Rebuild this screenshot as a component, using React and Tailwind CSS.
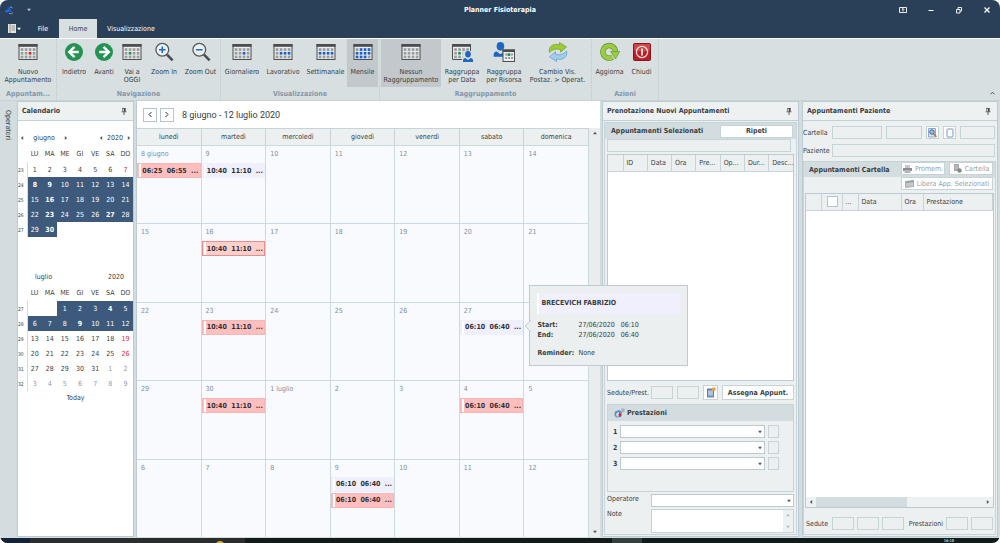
import { Fragment } from "react";

const WEEKDAYS = ["LU", "MA", "ME", "GI", "VE", "SA", "DO"];

const JUNE = [
  { week: 23, days: [1, 2, 3, 4, 5, 6, 7], red: [7] },
  { week: 24, days: [8, 9, 10, 11, 12, 13, 14], sel: [0, 6], bold: [8, 9] },
  { week: 25, days: [15, 16, 17, 18, 19, 20, 21], sel: [0, 6], bold: [16] },
  { week: 26, days: [22, 23, 24, 25, 26, 27, 28], sel: [0, 6], bold: [23, 27] },
  { week: 27, days: [29, 30, "", "", "", "", ""], sel: [0, 1], bold: [30] },
];

const JULY = [
  { week: 27, days: ["", "", 1, 2, 3, 4, 5], sel: [2, 6], bold: [4] },
  { week: 28, days: [6, 7, 8, 9, 10, 11, 12], sel: [0, 6], bold: [9] },
  { week: 29, days: [13, 14, 15, 16, 17, 18, 19], red: [19] },
  { week: 30, days: [20, 21, 22, 23, 24, 25, 26], red: [26] },
  { week: 31, days: [27, 28, 29, 30, 31, 1, 2], muted: [1, 2] },
  { week: 32, days: [3, 4, 5, 6, 7, 8, 9], muted: [3, 4, 5, 6, 7, 8, 9] },
];

const COLUMNS = ["lunedì", "martedì", "mercoledì", "giovedì", "venerdì", "sabato", "domenica"];

const PINK = "bg-[#ffbfbf] border-[#f9b4b4]";
const ACTIVE = "bg-[#ffcfcb] border-[#e98d8d]";
const LILAC = "bg-[#f0effd] border-[#f0effd]";

const WEEKS = [
  [
    { day: "8 giugno", events: [["06:25", "06:55", PINK]] },
    { day: "9", events: [["10:40", "11:10", LILAC]] },
    { day: "10" }, { day: "11" }, { day: "12" }, { day: "13" }, { day: "14" },
  ],
  [
    { day: "15" },
    { day: "16", events: [["10:40", "11:10", ACTIVE]] },
    { day: "17" }, { day: "18" }, { day: "19" }, { day: "20" }, { day: "21" },
  ],
  [
    { day: "22" },
    { day: "23", events: [["10:40", "11:10", PINK]] },
    { day: "24" }, { day: "25" }, { day: "26" },
    { day: "27", events: [["06:10", "06:40", LILAC]], tip: true },
    { day: "28" },
  ],
  [
    { day: "29" },
    { day: "30", events: [["10:40", "11:10", PINK]] },
    { day: "1 luglio" }, { day: "2" }, { day: "3" },
    { day: "4", events: [["06:10", "06:40", PINK]] },
    { day: "5" },
  ],
  [
    { day: "6" }, { day: "7" }, { day: "8" },
    { day: "9", events: [["06:10", "06:40", LILAC], ["06:10", "06:40", PINK]] },
    { day: "10" }, { day: "11" }, { day: "12" },
  ],
];

/* ---------- icons ---------- */

function GridIcon({ dots = [], color = "#1d5fc4" }) {
  const cells = [];
  for (let r = 0; r < 3; r++) {
    for (let c = 0; c < 4; c++) {
      const on = dots.includes(r * 4 + c);
      cells.push(
        <rect key={r * 4 + c} x={2.7 + c * 4} y={5.2 + r * 3.7} width="2.700" height="2.700" fill={on ? color : "#9a9c9d"} />
      );
    }
  }
  return (
    <svg width="20" height="18" viewBox="0 0 20 18" aria-hidden="true">
      <rect x="1" y="1.5" width="18" height="15" fill="#e9eded" stroke="#4d4d4f" />
      <rect x="0.5" y="1" width="19" height="2.800" fill="#4d4d4f" />
      {cells}
    </svg>
  );
}

function ArrowIcon({ right }) {
  return (
    <svg width="20" height="20" viewBox="0 0 20 20" aria-hidden="true">
      <circle cx="10" cy="10" r="9" fill="#249251" />
      <path
        d="M10.5 4.8 5.2 10l5.3 5.2M5.8 10h9"
        transform={right ? "rotate(180 10 10)" : undefined}
        fill="none" stroke="#fff" strokeWidth="2.4"
      />
    </svg>
  );
}

function MagnifierIcon({ plus }) {
  return (
    <svg width="20" height="20" viewBox="0 0 20 20" aria-hidden="true">
      <circle cx="8.3" cy="7.8" r="6.4" fill="#edf1f2" stroke="#55585a" strokeWidth="1.3" />
      <path d="m13 12.6 5.6 5.8" stroke="#4d4f51" strokeWidth="2.6" />
      <path d={plus ? "M5 7.8h6.6M8.3 4.5v6.6" : "M5 7.8h6.6"} stroke="#2467c9" strokeWidth="1.6" />
    </svg>
  );
}

function Person({ x, y }) {
  return (
    <g transform={`translate(${x} ${y})`} fill="#1f66c1">
      <ellipse cx="5" cy="3.2" rx="2.8" ry="3.2" />
      <path d="M0 11V9.2Q0 7.3 2.2 7L5 9l2.800-2Q10 7.300 10 9.200V11z" />
    </g>
  );
}

function GroupDateIcon() {
  return (
    <svg width="22" height="20" viewBox="0 0 22 20" aria-hidden="true">
      <path d="M11 17.500H1.500V2.500h18V9" fill="#e9eded" stroke="#4d4d4f" />
      <path d="M1 2h19v2.800H1z" fill="#4d4d4f" />
      {[0, 1, 2].map((r) =>
        [0, 1, 2, 3].map((c) => (
          <rect
            key={r * 4 + c} x={3.2 + c * 4} y={6.2 + r * 3.7} width="2.700" height="2.700"
            fill={r === 1 && c === 1 ? "#249251" : "#9a9c9d"}
          />
        ))
      )}
      <rect x="11.500" y="9" width="10.500" height="11" fill="#d8dfe1" />
      <Person x={12} y={9} />
    </svg>
  );
}

function GroupResourceIcon() {
  return (
    <svg width="22" height="20" viewBox="0 0 22 20" aria-hidden="true">
      <g transform="scale(1.350)">
        <Person x={0.5} y={0} />
      </g>
      <rect x="10" y="8" width="11.500" height="11.500" fill="#e9eded" stroke="#4d4d4f" />
      <path d="M9.500 7.500h12.500v2.500H9.500z" fill="#4d4d4f" />
      <path d="M12 11.500h2v2h-2zM18 11.500h2v2h-2zM12 15h2v2h-2zM15 15h2v2h-2zM18 15h2v2h-2z" fill="#9a9c9d" />
      <path d="M14.500 11.200h2.800v2.800h-2.800z" fill="#249251" />
    </svg>
  );
}

function SwapIcon() {
  return (
    <svg width="20" height="20" viewBox="0 0 20 20" aria-hidden="true">
      <path d="M1.500 10.500C0 4.500 5.500 1 11.500 2.800V.500L18.500 5l-6 5.200V7.600C8.500 6.500 5 7 1.500 10.500z" fill="#9ccb35" stroke="#6f9e1e" strokeWidth=".7" />
      <path d="M18.500 9C20 15 14.500 18.800 8.500 17v2.500L1.500 14.800l6-5.200v2.600c4 1.200 7.500.500 11-3.200z" fill="#a3cdec" stroke="#5f98c8" strokeWidth=".7" />
    </svg>
  );
}

function RefreshIcon() {
  return (
    <svg width="20" height="20" viewBox="0 0 20 20" aria-hidden="true">
      <path d="M12.500 15.200A6.300 6.300 0 1 1 15.500 9.500" fill="none" stroke="#5f9120" strokeWidth="5.400" />
      <path d="M12.500 15.200A6.300 6.300 0 1 1 15.500 9.500" fill="none" stroke="#9bcb45" strokeWidth="4.200" />
      <path d="M10.500 9.500h9.300L15.500 17z" fill="#9bcb45" stroke="#5f9120" strokeWidth=".6" />
    </svg>
  );
}

function PowerIcon() {
  return (
    <svg width="18" height="18" viewBox="0 0 18 18" aria-hidden="true">
      <rect x=".5" y=".5" width="17" height="17" rx="1" fill="#b91f25" stroke="#8a151a" />
      <path d="M1 1h16v6Q9 10 1 7z" fill="#d0474b" />
      <circle cx="9" cy="9" r="5.600" fill="none" stroke="#f3dede" strokeWidth="1.300" />
      <path d="M9 5.500v7" stroke="#f7e6e6" strokeWidth="1.800" />
    </svg>
  );
}

function PinIcon() {
  return (
    <svg width="6" height="7" viewBox="0 0 6 7" aria-hidden="true">
      <path d="M1.200.500h3.600M1.800.500v3M4 .500v3M.500 3.800h5M3 4v3" stroke="#42484c" strokeWidth=".8" fill="none" />
      <path d="M3 .500h1.400v3.200H3z" fill="#42484c" />
    </svg>
  );
}

function Caret({ dir = "down", className = "fill-[#555c60]" }) {
  const d = {
    down: "M0 1h5L2.500 4z",
    up: "M0 4h5L2.500 1z",
    left: "M4 0v5L1 2.500z",
    right: "M1 0v5l3-2.500z",
  }[dir];
  return (
    <svg width="4" height="4" viewBox="0 0 5 5" className={className} aria-hidden="true">
      <path d={d} />
    </svg>
  );
}

function LogoIcon() {
  return (
    <svg width="11" height="10" viewBox="0 0 11 10" aria-hidden="true">
      <path d="M4 2.500 8 .800 6.500 3.500 3.500 5z" fill="#1f5fd0" />
      <path d="M1 5.500 6 4l2 3-3-.500L2 8z" fill="#2368e0" />
      <path d="M5 8.500q3 1 4-1M6.500 2l2 1" stroke="#9fb6cc" strokeWidth=".8" fill="none" />
    </svg>
  );
}

/* ---------- ribbon ---------- */

function RibbonButton({ icon, label, active, className }) {
  return (
    <button type="button" className={`flex h-12 flex-col items-center pt-[3px] ${active ? "bg-[#c2c8cc]" : ""} ${className}`}>
      <span className="flex h-5 items-center">{icon}</span>
      <span className="mt-[6px] whitespace-pre text-center leading-[8px]">{label}</span>
    </button>
  );
}

function RibbonGroup({ title, children }) {
  return (
    <div className="flex flex-col border-r border-dotted border-[#bcc8cd] px-px">
      <div className="flex">{children}</div>
      <div className="text-center font-bold leading-[14px] text-[#8296ab]">{title}</div>
    </div>
  );
}

function Ribbon() {
  return (
    <div className="relative flex h-[63px] shrink-0 border-b border-[#c6d2d6] border-t border-t-white bg-[#d7dfe1]">
      <RibbonGroup title="Appuntam...">
        <RibbonButton className="w-[54px]" icon={<GridIcon dots={[6]} color="#ef2020" />} label={"Nuovo\nAppuntamento"} />
      </RibbonGroup>
      <RibbonGroup title="Navigazione">
        <RibbonButton className="w-8" icon={<ArrowIcon />} label="Indietro" />
        <RibbonButton className="w-7" icon={<ArrowIcon right />} label="Avanti" />
        <RibbonButton className="w-7" icon={<GridIcon dots={[5]} color="#249251" />} label={"Vai a\nOGGI"} />
        <RibbonButton className="w-9" icon={<MagnifierIcon plus />} label="Zoom In" />
        <RibbonButton className="w-[37px]" icon={<MagnifierIcon />} label="Zoom Out" />
      </RibbonGroup>
      <RibbonGroup title="Visualizzazione">
        <RibbonButton className="w-10" icon={<GridIcon dots={[6]} />} label="Giornaliero" />
        <RibbonButton className="w-[42px]" icon={<GridIcon dots={[5, 6, 7]} />} label="Lavorativo" />
        <RibbonButton className="w-[43px]" icon={<GridIcon dots={[4, 5, 6, 7]} />} label="Settimanale" />
        <RibbonButton
          className="w-[31px]" active
          icon={<GridIcon dots={[1, 2, 3, 4, 5, 6, 7, 8, 9, 10]} />} label="Mensile"
        />
      </RibbonGroup>
      <RibbonGroup title="Raggruppamento">
        <RibbonButton className="w-[60px]" active icon={<GridIcon />} label={"Nessun\nRaggruppamento"} />
        <RibbonButton className="w-[42px]" icon={<GroupDateIcon />} label={"Raggruppa\nper Data"} />
        <RibbonButton className="w-[42px]" icon={<GroupResourceIcon />} label={"Raggruppa\nper Risorsa"} />
        <RibbonButton className="w-[65px]" icon={<SwapIcon />} label={"Cambio Vis.\nPostaz. > Operat."} />
      </RibbonGroup>
      <RibbonGroup title="Azioni">
        <RibbonButton className="w-[33px]" icon={<RefreshIcon />} label="Aggiorna" />
        <RibbonButton className="w-[31px]" icon={<PowerIcon />} label="Chiudi" />
      </RibbonGroup>
      <button type="button" aria-label="Riduci barra" className="absolute bottom-1 right-1 p-px">
        <svg width="5" height="4" viewBox="0 0 5 4" aria-hidden="true">
          <path d="m.5 3.300 2-2 2 2" fill="none" stroke="#454b4f" />
        </svg>
      </button>
    </div>
  );
}

function TitleBar() {
  return (
    <header className="shrink-0 bg-[#2a4059] text-white">
      <div className="grid h-[19px] grid-cols-3 items-center">
        <div className="flex items-center gap-3 pl-1">
          <LogoIcon />
          <Caret className="fill-[#b9c5d0]" />
        </div>
        <h1 className="text-center font-bold">Planner Fisioterapia</h1>
        <div className="flex items-center justify-end gap-5 pr-[9px]">
          <button type="button" aria-label="Opzioni barra">
            <svg width="8" height="8" viewBox="0 0 8 8" fill="none" stroke="#fff" strokeWidth=".9" aria-hidden="true">
              <path d="M.5 1.500h7v5h-7zM4 5.500V2.500M2.800 3.700 4 2.500l1.200 1.200" />
            </svg>
          </button>
          <button type="button" aria-label="Riduci a icona">
            <svg width="8" height="8" viewBox="0 0 8 8" stroke="#fff" aria-hidden="true"><path d="M1.500 4.500h5" /></svg>
          </button>
          <button type="button" aria-label="Ripristina">
            <svg width="8" height="8" viewBox="0 0 8 8" fill="none" stroke="#fff" strokeWidth=".9" aria-hidden="true">
              <path d="M1.500 3.500h3.500v3.500H1.500zM3 3.500v-2h3.500V5H5" />
            </svg>
          </button>
          <button type="button" aria-label="Chiudi finestra">
            <svg width="8" height="8" viewBox="0 0 8 8" stroke="#fff" strokeWidth="1.300" aria-hidden="true">
              <path d="m1.500 1.500 5 5m0-5-5 5" />
            </svg>
          </button>
        </div>
      </div>
      <nav className="flex h-[19px] items-stretch">
        <button type="button" aria-label="Menu" className="flex w-[27px] items-center gap-px pl-2">
          <svg width="8" height="9" viewBox="0 0 8 9" aria-hidden="true">
            <path d="M0 0h8v9H0z" fill="#e4e4e0" />
            <path d="M2 0v9M3.500 2h3.500M3.500 4h3.500M3.500 6h3.500" stroke="#77716a" strokeWidth=".7" />
          </svg>
          <Caret className="fill-white" />
        </button>
        <button type="button" className="w-8">File</button>
        <button type="button" className="w-[38px] bg-[#d7dfe1] text-[#3a4045]">Home</button>
        <button type="button" className="px-[10px]">Visualizzazione</button>
      </nav>
    </header>
  );
}

/* ---------- left calendar ---------- */

function dayClass(row, day, i) {
  const selected = row.sel && i >= row.sel[0] && i <= row.sel[1];
  let c = "p-0 text-center font-normal";
  if (selected) c += " bg-[#3d5a7c] text-white";
  else if (row.red?.includes(day)) c += " text-[#d92c35]";
  else if (row.muted?.includes(day)) c += " text-[#8c9cab]";
  return c;
}

function MonthTable({ rows }) {
  return (
    <table className="w-full table-fixed border-collapse text-center">
      <thead>
        <tr className="h-4">
          <th className="w-[9px] p-0" />
          {WEEKDAYS.map((d) => <th key={d} className="p-0 font-normal">{d}</th>)}
        </tr>
      </thead>
      <tbody>
        {rows.map((row, r) => (
          <tr key={r} className="h-[15px]">
            <th className="border-r border-[#d5dde1] p-0 text-left text-[5px] font-normal">{row.week}</th>
            {row.days.map((d, i) => (
              <td key={i} className={dayClass(row, d, i)}>
                {row.bold?.includes(d) ? <b>{d}</b> : d}
              </td>
            ))}
          </tr>
        ))}
      </tbody>
    </table>
  );
}

function PanelTitle({ children }) {
  return (
    <div className="flex h-[19px] shrink-0 items-center justify-between border-b border-[#c3d0d5] bg-[#eef1f1] pl-1 pr-[6px]">
      <h2 className="font-bold">{children}</h2>
      <button type="button" aria-label="Blocca pannello"><PinIcon /></button>
    </div>
  );
}

function CalendarPanel() {
  return (
    <aside className="flex w-[117px] shrink-0 flex-col border border-[#bccbd1] bg-white">
      <PanelTitle>Calendario</PanelTitle>
      <div className="mt-[9px] flex h-4 items-center justify-between px-[2px]">
        <div className="flex w-12 items-center justify-between">
          <button type="button" aria-label="Mese precedente"><Caret dir="left" /></button>
          <span>giugno</span>
          <button type="button" aria-label="Mese successivo"><Caret dir="right" /></button>
        </div>
        <div className="flex items-center gap-1">
          <button type="button" aria-label="Anno precedente"><Caret dir="left" /></button>
          <span>2020</span>
          <button type="button" aria-label="Anno successivo"><Caret dir="right" /></button>
        </div>
      </div>
      <MonthTable rows={JUNE} />
      <div className="mt-8 flex h-4 items-center justify-between pl-[17px] pr-[9px]">
        <span>luglio</span>
        <span>2020</span>
      </div>
      <MonthTable rows={JULY} />
      <button type="button" className="mt-[2px] self-center">Today</button>
    </aside>
  );
}

/* ---------- scheduler ---------- */

function Event({ start, end, tone }) {
  return (
    <button type="button" className={`mb-px flex h-[15px] w-full items-center border pl-px ${tone}`}>
      <span className="h-[13px] w-[2px] bg-white" />
      <span className="flex-1 whitespace-pre text-center font-bold text-[#2c3034]">{`${start}  ${end}  ...`}</span>
    </button>
  );
}

function EventTip() {
  return (
    <div
      role="tooltip"
      className="absolute -top-[18px] left-full z-20 ml-[6px] w-[159px] border border-[#bccbd1] bg-[#ebefef] p-[7px]"
    >
      <svg width="7" height="12" viewBox="0 0 7 12" className="absolute -left-[6px] top-[34px]" aria-hidden="true">
        <path d="M7 0 1 6l6 6" fill="#ebefef" stroke="#bccbd1" />
      </svg>
      <div className="mb-[6px] border-l-2 border-white bg-[#f0effd] pl-[2px] font-bold leading-[21px]">BRECEVICH FABRIZIO</div>
      <dl className="grid grid-cols-[41px_1fr] leading-[10px]">
        <dt className="font-bold">Start:</dt>
        <dd className="whitespace-pre">{"27/06/2020   06:10"}</dd>
        <dt className="font-bold">End:</dt>
        <dd className="whitespace-pre">{"27/06/2020   06:40"}</dd>
        <dt className="mt-2 font-bold">Reminder:</dt>
        <dd className="mt-2">None</dd>
      </dl>
    </div>
  );
}

function Scheduler() {
  return (
    <main className="relative z-10 flex min-w-0 flex-1 flex-col border-l border-[#bccbd1] bg-white">
      <div className="flex h-[27px] shrink-0 items-center gap-[3px] pl-[6px]">
        <button type="button" aria-label="Indietro" className="grid size-[14px] place-items-center border border-[#b5c5cc]">
          <svg width="6" height="7" viewBox="0 0 6 7" fill="none" stroke="#333" aria-hidden="true"><path d="M4.500 1 2 3.500 4.500 6" /></svg>
        </button>
        <button type="button" aria-label="Avanti" className="grid size-[14px] place-items-center border border-[#b5c5cc]">
          <svg width="6" height="7" viewBox="0 0 6 7" fill="none" stroke="#333" aria-hidden="true"><path d="M1.500 1 4 3.500 1.500 6" /></svg>
        </button>
        <span className="ml-[5px] font-[Roboto,sans-serif] text-[9px]">8 giugno - 12 luglio 2020</span>
      </div>
      <div className="flex min-h-0 flex-1">
        <div className="grid flex-1 grid-cols-7 grid-rows-[17px_repeat(5,minmax(0,1fr))]">
          {COLUMNS.map((c) => (
            <div key={c} className="flex items-center justify-center border-r border-t border-[#c7d3d9] bg-[#edf0f0]">{c}</div>
          ))}
          {WEEKS.map((week, w) => (
            <Fragment key={w}>
              {week.map((cell) => (
                <div key={cell.day} className="relative min-w-0 border-r border-t border-[#ccd9e0] bg-[#f8fafd]">
                  <div className="pl-1 leading-[17px] text-[#7f8f9f]">{cell.day}</div>
                  {cell.events?.map(([start, end, tone], i) => (
                    <Event key={i} start={start} end={end} tone={tone} />
                  ))}
                  {cell.tip && <EventTip />}
                </div>
              ))}
            </Fragment>
          ))}
        </div>
        <div className="flex w-[11px] shrink-0 flex-col items-center justify-between bg-[#e9edee] py-[3px]">
          <Caret dir="up" />
          <Caret />
        </div>
      </div>
    </main>
  );
}

/* ---------- right panels ---------- */

function Box({ label, className = "w-[22px]" }) {
  return <input aria-label={label} readOnly className={`h-[13px] min-w-0 border border-[#c6d3d7] bg-[#edf0f0] ${className}`} />;
}

function DropDown({ id, className = "" }) {
  return (
    <div className={`relative flex h-[13px] min-w-0 ${className}`}>
      <select id={id} className="w-full appearance-none border border-[#bccbd1] bg-white" />
      <span className="pointer-events-none absolute right-[3px] top-[5px]"><Caret /></span>
    </div>
  );
}

function Button({ children, className = "" }) {
  return (
    <button type="button" className={`flex items-center justify-center border border-[#c6d3d7] bg-white ${className}`}>
      {children}
    </button>
  );
}

function BookingPanel() {
  return (
    <section className="flex w-[197px] shrink-0 flex-col border border-[#bccbd1] bg-[#edf0f0]">
      <PanelTitle>Prenotazione Nuovi Appuntamenti</PanelTitle>
      <div className="m-px flex min-h-0 flex-1 flex-col border border-[#c6d3d7]">
        <div className="flex h-4 shrink-0 items-center justify-between bg-[#d3dcdf] pl-[6px] pr-[3px]">
          <h3 className="font-bold">Appuntamenti Selezionati</h3>
          <Button className="h-[13px] w-[73px] font-bold">Ripeti</Button>
        </div>
        <div className="flex min-h-0 flex-1 flex-col px-[2px] pb-px">
          <Box label="Filtro" className="w-[184px] shrink-0" />
          <div className="mt-[2px] flex-1 border border-[#bccbd1] bg-white">
            <table className="w-full table-fixed border-collapse bg-[#edf0f0] text-left">
              <thead>
                <tr className="h-4 border-b border-[#c6d3d7]">
                  <th className="w-[15px] border-r border-[#c6d3d7] p-0" />
                  {["ID", "Data", "Ora", "Pre...", "Op...", "Dur...", "Desc..."].map((h) => (
                    <th key={h} className="border-r border-[#c6d3d7] p-0 pl-[3px] font-normal last:border-r-0">{h}</th>
                  ))}
                </tr>
              </thead>
            </table>
          </div>
          <div className="my-1 flex h-[15px] shrink-0 items-center gap-1">
            <span className="w-10 shrink-0">Sedute/Prest.</span>
            <Box label="Sedute" />
            <Box label="Prestazioni previste" />
            <Button className="h-[15px] w-[15px]">
              <svg width="10" height="11" viewBox="0 0 10 11" role="img" aria-label="Nuovo">
                <path d="M1 1.500h7v9H1z" fill="#5c7fae" />
                <path d="M2 3h5v6.500H2z" fill="#8caad0" />
                <path d="M2 5h5M2 7h5" stroke="#fff" strokeWidth=".6" />
                <circle cx="7.800" cy="2.200" r="1.900" fill="#f1a032" />
              </svg>
            </Button>
            <Button className="h-[15px] flex-1 whitespace-nowrap font-bold">Assegna Appunt.</Button>
          </div>
          <div className="h-[88px] shrink-0 border border-[#c6d3d7]">
            <div className="mb-1 flex h-4 items-center gap-[2px] bg-[#d3dcdf] pl-[6px]">
              <svg width="11" height="10" viewBox="0 0 11 10" aria-hidden="true">
                <path d="M1 3.500 5 2l3 2-1 5-5 .500L.500 7z" fill="#5f8ac4" />
                <path d="M2.500 5 5 4.200v4l-2.500.300z" fill="#dfe9f4" />
                <path d="M4.200 6.800h3.200M5.800 5.200v3.200" stroke="#d0202a" strokeWidth="1.200" />
                <path d="M7 .500h3.500v3.500H8z" fill="#a7afb6" />
              </svg>
              <h3 className="font-bold">Prestazioni</h3>
            </div>
            {[1, 2, 3].map((n) => (
              <div key={n} className="mb-[3px] flex items-center gap-[2px] pl-[5px] pr-[14px]">
                <label htmlFor={`prest-${n}`} className="w-[5px] font-bold">{n}</label>
                <DropDown id={`prest-${n}`} className="flex-1" />
                <Box label={`Quantità ${n}`} className="ml-px w-[11px]" />
              </div>
            ))}
          </div>
          <div className="mt-[2px] flex shrink-0">
            <label htmlFor="operatore" className="w-11 leading-[10px]">Operatore</label>
            <DropDown id="operatore" className="flex-1" />
          </div>
          <div className="mt-[2px] flex h-6 shrink-0">
            <label htmlFor="note" className="w-11 leading-[10px]">Note</label>
            <div className="flex min-w-0 flex-1 border border-[#c6d3d7] bg-white">
              <textarea id="note" className="min-w-0 flex-1 resize-none" />
              <div className="flex w-[10px] flex-col items-center justify-between bg-[#eef1f1] py-[3px]">
                <Caret dir="up" className="fill-[#b4bfc4]" />
                <Caret className="fill-[#b4bfc4]" />
              </div>
            </div>
          </div>
        </div>
      </div>
    </section>
  );
}

function PatientPanel() {
  return (
    <section className="flex w-[196px] shrink-0 flex-col border border-[#bccbd1] bg-[#edf0f0]">
      <PanelTitle>Appuntamenti Paziente</PanelTitle>
      <div className="mt-[5px] flex shrink-0 items-center gap-1 pr-[2px]">
        <span className="w-[25px] shrink-0">Cartella</span>
        <Box label="Cartella" className="w-[50px]" />
        <Box label="Numero cartella" className="w-9" />
        <Button className="h-[13px] w-[13px]">
          <svg width="9" height="10" viewBox="0 0 9 10" role="img" aria-label="Cerca">
            <path d="M.5.500h7v8.500h-7z" fill="#d7e2f3" stroke="#8fa7cf" />
            <circle cx="4" cy="4" r="2.200" fill="#9fc4ea" stroke="#3e5c93" />
            <path d="m5.500 5.800 3 3" stroke="#c96a3b" strokeWidth="1.500" />
          </svg>
        </Button>
        <Button className="h-[13px] w-[13px]">
          <svg width="8" height="10" viewBox="0 0 8 10" role="img" aria-label="Nuova cartella">
            <rect x="1" y="1" width="6" height="8" rx=".5" fill="#fff" stroke="#7d92c4" />
          </svg>
        </Button>
        <Box label="Codice" className="flex-1" />
      </div>
      <div className="mt-[5px] flex shrink-0 items-center gap-1 pr-[2px]">
        <label htmlFor="paziente" className="w-[25px] shrink-0">Paziente</label>
        <input id="paziente" readOnly className="h-[13px] min-w-0 flex-1 border border-[#c6d3d7] bg-[#edf0f0]" />
      </div>
      <div className="mb-px mr-px mt-1 flex min-h-0 flex-1 flex-col border border-[#c6d3d7]">
        <div className="flex h-[31px] shrink-0 justify-between bg-linear-to-b from-[#d3dcdf] from-50% to-[#edf0f0] to-50% pl-[5px] pr-[2px]">
          <h3 className="font-bold leading-4">Appuntamenti Cartella</h3>
          <div className="grid h-[28px] w-[92px] grid-cols-2 gap-x-1 gap-y-[2px] text-[#93a0ab]">
            <Button className="gap-[3px]">
              <svg width="9" height="8" viewBox="0 0 9 8" aria-hidden="true">
                <path d="M2 0h5v3H2z" fill="#c4c7c9" />
                <path d="M0 3h9v3H0z" fill="#8b8f92" />
                <path d="M1.500 5h6v3h-6z" fill="#b3b7ba" />
              </svg>
              Promem.
            </Button>
            <Button className="gap-[3px]">
              <svg width="9" height="9" viewBox="0 0 9 9" aria-hidden="true">
                <path d="M1 0h5v7H1z" fill="#a3a7aa" />
                <path d="M2 2h3M2 4h3" stroke="#ddd" strokeWidth=".7" />
                <circle cx="6.500" cy="6.500" r="2.200" fill="#85898c" />
              </svg>
              Cartella
            </Button>
            <Button className="col-span-2 gap-[3px] whitespace-nowrap">
              <svg width="9" height="8" viewBox="0 0 9 8" aria-hidden="true">
                <path d="M.5 1.500 8.500.500v6l-8 1z" fill="#c3c6c8" stroke="#96999b" strokeWidth=".7" />
                <path d="M.5 1.500 8.500.500v1.500l-8 1z" fill="#96999b" />
              </svg>
              Libera App. Selezionati
            </Button>
          </div>
        </div>
        <div className="mx-px flex min-h-0 flex-1 flex-col border border-[#bccbd1] bg-white">
          <table className="w-full table-fixed border-collapse bg-[#edf0f0] text-left">
            <thead>
              <tr className="h-4 border-b border-[#c6d3d7] *:border-r *:border-[#c6d3d7] *:p-0 *:pl-[3px] *:font-normal">
                <th className="w-[15px]" />
                <th className="w-[21px]">
                  <input
                    type="checkbox" aria-label="Seleziona tutti"
                    className="ml-[2px] block size-[11px] appearance-none border border-[#b5c5cc] bg-white"
                  />
                </th>
                <th className="w-4">...</th>
                <th className="w-[43px]">Data</th>
                <th className="w-[22px]">Ora</th>
                <th>Prestazione</th>
              </tr>
            </thead>
          </table>
          <div className="mt-auto flex h-[10px] items-center gap-[3px] bg-[#eef1f1] px-[3px]">
            <Caret dir="left" />
            <div className="h-full w-1/2 bg-[#d3dcdf]" />
            <span className="ml-auto"><Caret dir="right" /></span>
          </div>
        </div>
        <div className="mb-[4px] mt-[9px] flex shrink-0 items-center gap-[3px] pl-[2px] pr-[2px]">
          <span className="w-[23px]">Sedute</span>
          <Box label="Sedute totali" />
          <Box label="Sedute fatte" />
          <Box label="Sedute residue" />
          <span className="ml-auto">Prestazioni</span>
          <Box label="Prestazioni totali" />
          <Box label="Prestazioni residue" />
        </div>
      </div>
    </section>
  );
}

export default function App() {
  return (
    <div className="flex h-screen flex-col overflow-hidden rounded-lg bg-[#d3dcdf] font-['DejaVu_Sans_Condensed','Noto_Sans',sans-serif] text-[7px] leading-[10px] text-[#383e43]">
      <TitleBar />
      <Ribbon />
      <div className="flex min-h-0 flex-1 pb-px pr-[2px]">
        <div className="w-[17px] shrink-0">
          <button type="button" className="mt-[9px] pl-[3px] [writing-mode:vertical-rl]">Operatori</button>
        </div>
        <CalendarPanel />
        <div className="w-[2px] shrink-0" />
        <Scheduler />
        <div className="w-[2px] shrink-0" />
        <BookingPanel />
        <div className="w-[3px] shrink-0" />
        <PatientPanel />
      </div>
      <footer className="flex h-[5px] shrink-0 items-start overflow-hidden bg-[#111c1a]">
        <div className="h-full w-[30px] bg-[#14223a]" />
        <div className="flex h-full w-[215px] justify-end bg-[#292d2d] pr-[21px]">
          <span className="mt-[3px] size-2 rounded-full bg-[#eab21c]" />
        </div>
        <div className="ml-[367px] h-full w-[30px] bg-[#34403e]" />
        <time className="ml-auto mr-[46px] text-[4px] leading-[5px] text-white">16:18</time>
      </footer>
    </div>
  );
}
